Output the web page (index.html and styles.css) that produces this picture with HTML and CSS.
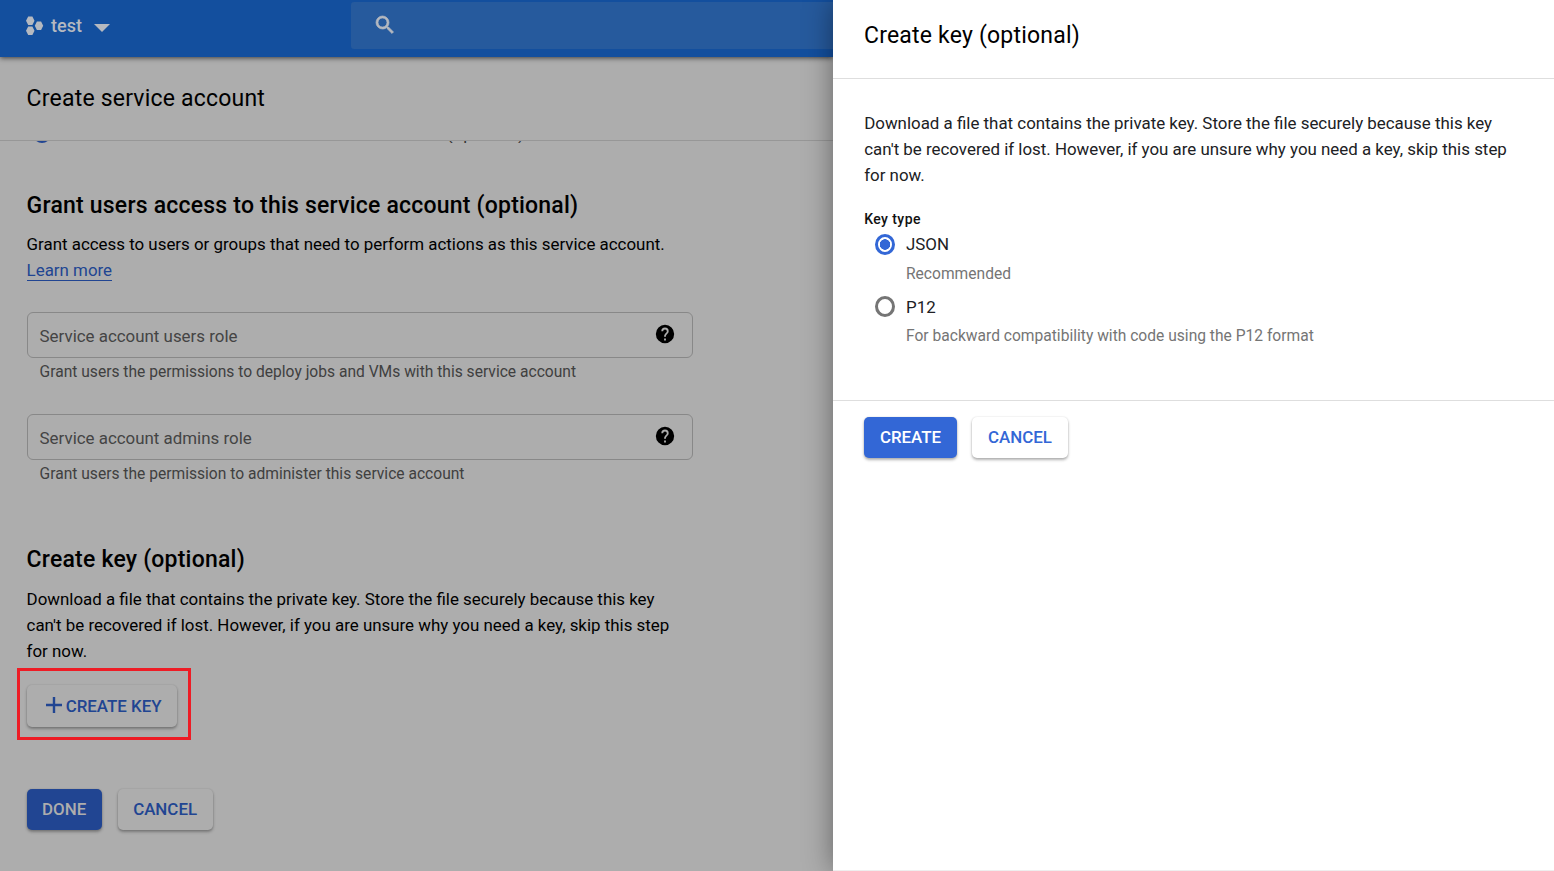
FILE: index.html
```html
<!DOCTYPE html>
<html lang="en">
<head>
<meta charset="utf-8">
<title>Create service account</title>
<link rel="stylesheet" href="styles.css">
</head>
<body>
<div class="app">
  <main class="page">
    <header class="topbar">
      <div class="project">
        <svg class="project-icon" width="18" height="20" viewBox="0 0 18 20"><path d="M2.200.5h4.200L8.500 4.700 6.400 9H2.200L0 4.700zM2.200 10.500h4.200l2.100 4.300L6.400 19H2.200L0 14.800zM10.900 5.500h4.200l2.100 4.300-2.100 4.200h-4.200L8.800 9.800z"/></svg>
        <span class="project-name">test</span>
        <svg class="caret" width="16" height="8" viewBox="0 0 16 8"><path d="M0 0h16L8 8z"/></svg>
      </div>
      <div class="search">
        <svg width="24" height="24" viewBox="0 0 24 24"><path stroke-width=".7" d="M15.500 14h-.79l-.28-.27A6.470 6.470 0 0 0 16 9.500 6.500 6.500 0 1 0 9.500 16c1.610 0 3.090-.59 4.230-1.570l.27.28v.79l5 4.990L20.490 19l-4.990-5zm-6 0C7.010 14 5 11.990 5 9.500S7.010 5 9.500 5 14 7.010 14 9.500 11.990 14 9.500 14z"/></svg>
      </div>
    </header>
    <div class="titlebar"><h1 class="title">Create service account</h1></div>
    <div class="stepper"><span class="step-dot"></span><span class="step-label">(optional)</span></div>
    <section class="content">
      <h2 class="heading users-heading">Grant users access to this service account (optional)</h2>
      <p class="text">Grant access to users or groups that need to perform actions as this service account.<br><a class="link">Learn more</a></p>
      <div class="field">
        <span class="field-label">Service account users role</span>
        <svg class="help" width="22" height="22" viewBox="0 0 24 24"><path d="M12 2a10 10 0 1 0 0 20 10 10 0 0 0 0-20zm1 17h-2v-2h2v2zm2.070-7.750-.9.920C13.450 12.900 13 13.500 13 15h-2v-.5c0-1.100.45-2.100 1.170-2.830l1.240-1.260c.37-.36.59-.86.59-1.410a2 2 0 1 0-4 0H8a4 4 0 1 1 8 0c0 .88-.36 1.680-.93 2.250z"/></svg>
      </div>
      <p class="hint users-hint">Grant users the permissions to deploy jobs and VMs with this service account</p>
      <div class="field field-admins">
        <span class="field-label admins-label">Service account admins role</span>
        <svg class="help" width="22" height="22" viewBox="0 0 24 24"><path d="M12 2a10 10 0 1 0 0 20 10 10 0 0 0 0-20zm1 17h-2v-2h2v2zm2.070-7.750-.9.920C13.450 12.900 13 13.500 13 15h-2v-.5c0-1.100.45-2.100 1.170-2.830l1.240-1.260c.37-.36.59-.86.59-1.410a2 2 0 1 0-4 0H8a4 4 0 1 1 8 0c0 .88-.36 1.680-.93 2.250z"/></svg>
      </div>
      <p class="hint admins-hint">Grant users the permission to administer this service account</p>
      <h2 class="heading key-heading">Create key (optional)</h2>
      <p class="text key-text">Download a file that contains the private key. Store the file securely because this key<br>can't be recovered if lost. However, if you are unsure why you need a key, skip this step<br>for now.</p>
      <div class="key-action">
        <button class="button create-key"><svg width="16" height="16" viewBox="0 0 16 16"><path d="M6.800 0h2.400v6.800H16v2.400H9.200V16H6.800V9.200H0V6.800h6.800z"/></svg>CREATE KEY</button>
        <div class="highlight"></div>
      </div>
      <div class="actions">
        <button class="button primary done">DONE</button>
        <button class="button cancel">CANCEL</button>
      </div>
    </section>
  </main>
  <aside class="panel">
    <div class="panel-head"><h1 class="title">Create key (optional)</h1></div>
    <div class="panel-body">
      <p class="text">Download a file that contains the private key. Store the file securely because this key<br>can't be recovered if lost. However, if you are unsure why you need a key, skip this step<br>for now.</p>
      <div class="key-type">Key type</div>
      <div class="option">
        <span class="radio checked"></span>
        <div><div class="option-name">JSON</div><div class="option-hint">Recommended</div></div>
      </div>
      <div class="option second">
        <span class="radio"></span>
        <div><div class="option-name">P12</div><div class="option-hint">For backward compatibility with code using the P12 format</div></div>
      </div>
    </div>
    <div class="panel-actions">
      <button class="button primary create">CREATE</button>
      <button class="button cancel">CANCEL</button>
    </div>
  </aside>
</div>
</body>
</html>
```
FILE: styles.css
```css
* { box-sizing: border-box; }
body { margin: 0; font-family: Roboto, sans-serif; color: #000; overflow: hidden; }
h1, h2, p { margin: 0; }
svg { display: block; flex: none; }
.app { display: flex; width: 1554px; height: 871px; }
.page { width: 833px; background: #adadad; display: flex; flex-direction: column; }
.topbar { height: 57px; flex: none; background: #134f9e; display: flex; align-items: flex-start; box-shadow: 0 1px 5px rgba(0,0,0,.65); position: relative; }
.project { width: 351px; height: 51px; padding-left: 26px; display: flex; align-items: center; fill: #b5b9c0; color: #b5b9c0; }
.project-name { font-size: 18px; font-weight: 500; margin-left: 7px; width: 43px; }
.caret { margin-top: 4px; }
.search { margin-top: 2px; flex: 1; height: 47px; background: #265a9d; border-radius: 3px 0 0 3px; padding: 11px 0 0 22px; fill: #b5b9c0; stroke: #b5b9c0; }
.titlebar { height: 84px; flex: none; border-bottom: 1px solid #979797; padding: 28px 0 0 26.600px; }
.title { font-size: 23px; font-weight: 400; line-height: 28px; letter-spacing: .2px; white-space: nowrap; }
.stepper { height: 2px; flex: none; overflow: hidden; display: flex; align-items: flex-end; padding-left: 33px; }
.step-dot { width: 18px; height: 18px; border-radius: 50%; background: #214592; }
.step-label { margin-left: 396px; font-size: 17px; line-height: 17px; letter-spacing: .4px; color: #333; }
.content { padding: 49px 0 0 26.600px; }
.heading { font-size: 23px; font-weight: 500; line-height: 28px; letter-spacing: .21px; white-space: nowrap; }
.text { font-size: 16.900px; line-height: 26px; white-space: nowrap; }
.users-heading + .text { margin-top: 11px; }
.link { color: #214592; border-bottom: 1px solid #214592; }
.field { width: 666px; height: 46px; border: 1px solid #888; border-radius: 6px; margin-top: 29px; padding: 2px 16px 0 12px; display: flex; align-items: center; justify-content: space-between; }
.help { margin-bottom: 5px; }
.field-label { font-size: 16.900px; color: #444; }
.hint { font-size: 15.600px; line-height: 20px; color: #404040; margin: 4px 0 0 13px; white-space: nowrap; }
.field-admins { margin-top: 32px; }
.key-heading { margin-top: 62px; }
.key-text { margin-top: 12px; }
.key-action { position: relative; margin-top: 21px; height: 42px; }
.highlight { position: absolute; left: -9.600px; top: -17px; width: 174px; height: 72px; border: 3px solid #ee1c25; }
.button { font-family: Roboto, sans-serif; font-size: 16.900px; font-weight: 500; height: 41px; border: 0; border-radius: 5px; padding: 0 0 1px; display: flex; align-items: center; justify-content: center; box-shadow: 0 2px 3px rgba(0,0,0,.3), 0 0 2px rgba(0,0,0,.12); background: #adadad; color: #214592; }
.create-key { width: 150px; height: 42px; gap: 4px; padding: 0 0 0 4px; fill: #214592; }
.create-key svg { margin-bottom: 2px; }
.actions { display: flex; gap: 16px; margin-top: 62px; }
.done { width: 75px; }
.cancel { width: 95px; }
.page .primary { background: #214592; color: #adadad; }
.panel { width: 721px; background: #fff; position: relative; border-bottom: 1px solid #eee; box-shadow: 0 0 27px rgba(0,0,0,.42); }
.panel-head { height: 79px; border-bottom: 1px solid #dedede; padding: 22px 0 0 31px; }
.panel-body { height: 322px; border-bottom: 1px solid #dedede; padding: 31px 0 0 31.200px; color: #202124; }
.key-type { font-size: 14px; font-weight: 500; line-height: 18px; margin-top: 22px; letter-spacing: .42px; color: #111; }
.option { display: flex; height: 62px; padding: 6px 0 0 10.800px; gap: 11px; }
.radio { width: 20px; height: 21px; border: 3px solid #757575; border-radius: 50%; flex: none; }
.radio.checked { border-color: #3367d6; background: radial-gradient(circle, #3367d6 0 5px, #fff 5.500px); }
.option-name { font-size: 16.900px; line-height: 20px; }
.second .option-name { margin-top: 1px; }
.second .option-hint { margin-top: 9px; }
.option-hint { font-size: 15.600px; line-height: 20px; margin-top: 10px; color: #757575; white-space: nowrap; }
.panel-actions { display: flex; gap: 15px; padding: 16px 0 0 31px; }
.panel .button { background: #fff; color: #3367d6; }
.panel .primary { background: #3367d6; color: #fff; width: 93px; }
.panel .cancel { width: 96px; }
```
